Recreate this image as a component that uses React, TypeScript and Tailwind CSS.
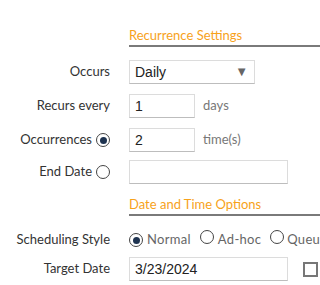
import React from 'react';

const Radio = ({ checked }: { checked?: boolean }) => (
  <span className="inline-flex items-center justify-center w-[14px] h-[14px] rounded-full border-[1.5px] border-[#444] bg-white shrink-0">
    {checked && <span className="w-[7px] h-[7px] rounded-full bg-[#1e3350]" />}
  </span>
);

const Section = ({ title, className }: { title: string; className: string }) => (
  <div className={`ml-[129px] w-[260px] h-[20px] border-b-2 border-[#7a7a7a] text-[13px] leading-[17px] text-[#f7a21b] ${className}`}>
    {title}
  </div>
);

const Row = ({ label, className, children }: { label: React.ReactNode; className: string; children: React.ReactNode }) => (
  <div className={`flex items-center h-[24px] ${className}`}>
    <div className="w-[110px] shrink-0 flex items-center justify-end gap-[4px] text-[13px] text-[#333]">{label}</div>
    <div className="ml-[19px] shrink-0 flex items-center">{children}</div>
  </div>
);

const inputCls =
  "h-[24px] border border-[#dcdcdc] border-b-[#bdbdbd] bg-white px-[5px] flex items-center text-[14px] text-[#222] font-['Liberation_Sans',Arial,sans-serif]";

export default function App() {
  return (
    <div className="w-[320px] h-[285px] overflow-hidden bg-white font-['Lato','Open_Sans',sans-serif]">
      <Section title="Recurrence Settings" className="mt-[27px]" />

      <Row label="Occurs" className="mt-[13px]">
        <div className={`${inputCls} w-[126px] justify-between pr-[6px]`}>
          <span>Daily</span>
          <span className="text-[13px] text-[#666]">▼</span>
        </div>
      </Row>

      <Row label="Recurs every" className="mt-[10px]">
        <div className={`${inputCls} w-[66px]`}>1</div>
        <span className="ml-[8px] text-[13px] text-[#777]">days</span>
      </Row>

      <Row
        label={
          <>
            <span>Occurrences</span>
            <Radio checked />
          </>
        }
        className="mt-[10px]"
      >
        <div className={`${inputCls} w-[66px]`}>2</div>
        <span className="ml-[8px] text-[13px] text-[#777]">time(s)</span>
      </Row>

      <Row
        label={
          <>
            <span>End Date</span>
            <Radio />
          </>
        }
        className="mt-[8px]"
      >
        <div className={`${inputCls} w-[159px] bg-[#f4f4f4]`} />
      </Row>

      <Section title="Date and Time Options" className="mt-[12px]" />

      <Row label="Scheduling Style" className="mt-[12px]">
        <div className="flex items-center text-[13px] text-[#666] whitespace-nowrap tracking-[0.3px]">
          <Radio checked />
          <span className="ml-[4px]">Normal</span>
          <span className="ml-[9px]"><Radio /></span>
          <span className="ml-[4px]">Ad-hoc</span>
          <span className="ml-[9px]"><Radio /></span>
          <span className="ml-[3px]">Queue</span>
        </div>
      </Row>

      <Row label="Target Date" className="mt-[5px]">
        <div className={`${inputCls} w-[159px]`}>3/23/2024</div>
        <span className="ml-[15px] w-[15px] h-[15px] border-2 border-[#777] bg-white shrink-0" />
      </Row>
    </div>
  );
}
